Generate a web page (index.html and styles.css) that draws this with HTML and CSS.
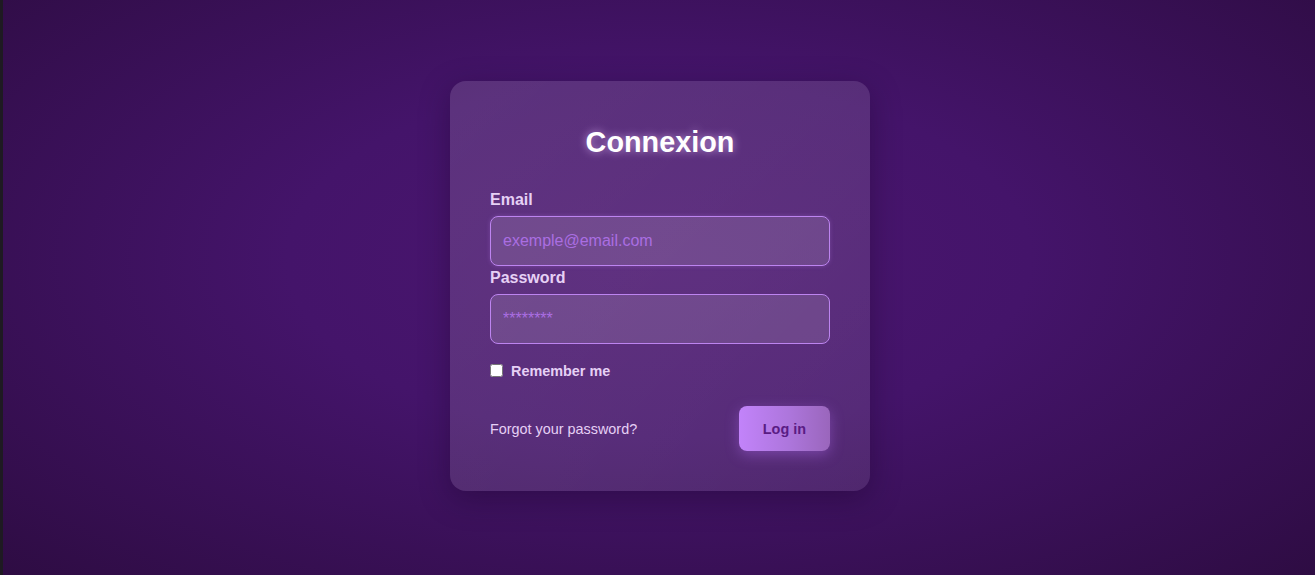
FILE: index.html
```html
<!DOCTYPE html>
<html lang="fr">
<head>
<meta charset="utf-8">
<title>Connexion</title>
<link rel="stylesheet" href="styles.css">
</head>
<body>
<main class="page">
  <form class="card">
    <h1 class="title">Connexion</h1>
    <label class="label" for="email">Email</label>
    <input class="field field-email" id="email" type="email" placeholder="exemple@email.com" autofocus>
    <label class="label label-pass" for="pass">Password</label>
    <input class="field" id="pass" type="password" placeholder="********">
    <label class="remember"><input class="check" type="checkbox"><span>Remember me</span></label>
    <div class="actions">
      <a class="forgot" href="#">Forgot your password?</a>
      <button class="btn" type="button">Log in</button>
    </div>
  </form>
</main>
</body>
</html>
```
FILE: styles.css
```css
html, body {
  margin: 0;
  height: 100%;
}
body {
  font-family: "Liberation Sans", Arial, sans-serif;
  background: #1e1a22;
}
.page {
  margin-left: 3px;
  height: 100%;
  box-sizing: border-box;
  padding: 0 0 3px 2px;
  display: flex;
  align-items: center;
  justify-content: center;
  background: radial-gradient(ellipse at 50% 45%, #4b1670 0%, #44146a 40%, #2e0c43 100%);
}
.card {
  width: 420px;
  box-sizing: border-box;
  padding: 40px;
  border-radius: 16px;
  background: linear-gradient(135deg, rgba(255,255,255,0.13), rgba(255,255,255,0.11) 60%, rgba(255,255,255,0.09));
  box-shadow: 0 8px 30px rgba(20, 0, 35, 0.35);
  display: flex;
  flex-direction: column;
}
.title {
  margin: 5px 0 32px;
  font-size: 28.8px;
  line-height: 33px;
  font-weight: 700;
  text-align: center;
  color: #ffffff;
  text-shadow: 0 0 8px rgba(230, 190, 255, 0.7);
}
.label {
  display: block;
  font-size: 16px;
  line-height: 18px;
  font-weight: 700;
  color: #e6d0f5;
  margin-bottom: 7px;
}
.label-pass {
  margin-top: 3px;
}
.field {
  box-sizing: border-box;
  width: 100%;
  height: 50px;
  padding: 0 12px;
  font-family: "Liberation Sans", Arial, sans-serif;
  font-size: 16px;
  color: #ffffff;
  background: rgba(255, 255, 255, 0.12);
  border: 1px solid #bd84f0;
  border-radius: 8px;
  outline: none;
}
.field::placeholder {
  color: #aa6ee2;
}
.field-email {
  caret-color: #ffffff;
  box-shadow: 0 0 4px rgba(200, 140, 255, 0.25);
}
.remember {
  display: flex;
  align-items: center;
  height: 17px;
  margin-top: 18px;
  font-size: 14.4px;
  font-weight: 700;
  color: #e6d0f5;
}
.check {
  width: 13px;
  height: 13px;
  margin: 0 8px 0 0;
}
.actions {
  display: flex;
  align-items: center;
  justify-content: space-between;
  margin-top: 27px;
}
.forgot {
  font-size: 14.4px;
  color: #e6d0f5;
  text-decoration: none;
}
.btn {
  padding: 0 24px;
  height: 45px;
  border: none;
  border-radius: 8px;
  font-family: "Liberation Sans", Arial, sans-serif;
  font-size: 14.4px;
  font-weight: 700;
  color: #5a1c84;
  background: linear-gradient(90deg, #c283fa 0%, #ad76dc 55%, #9a66bc 100%);
  box-shadow: 0 4px 14px rgba(190, 120, 255, 0.35);
  cursor: pointer;
}
```
